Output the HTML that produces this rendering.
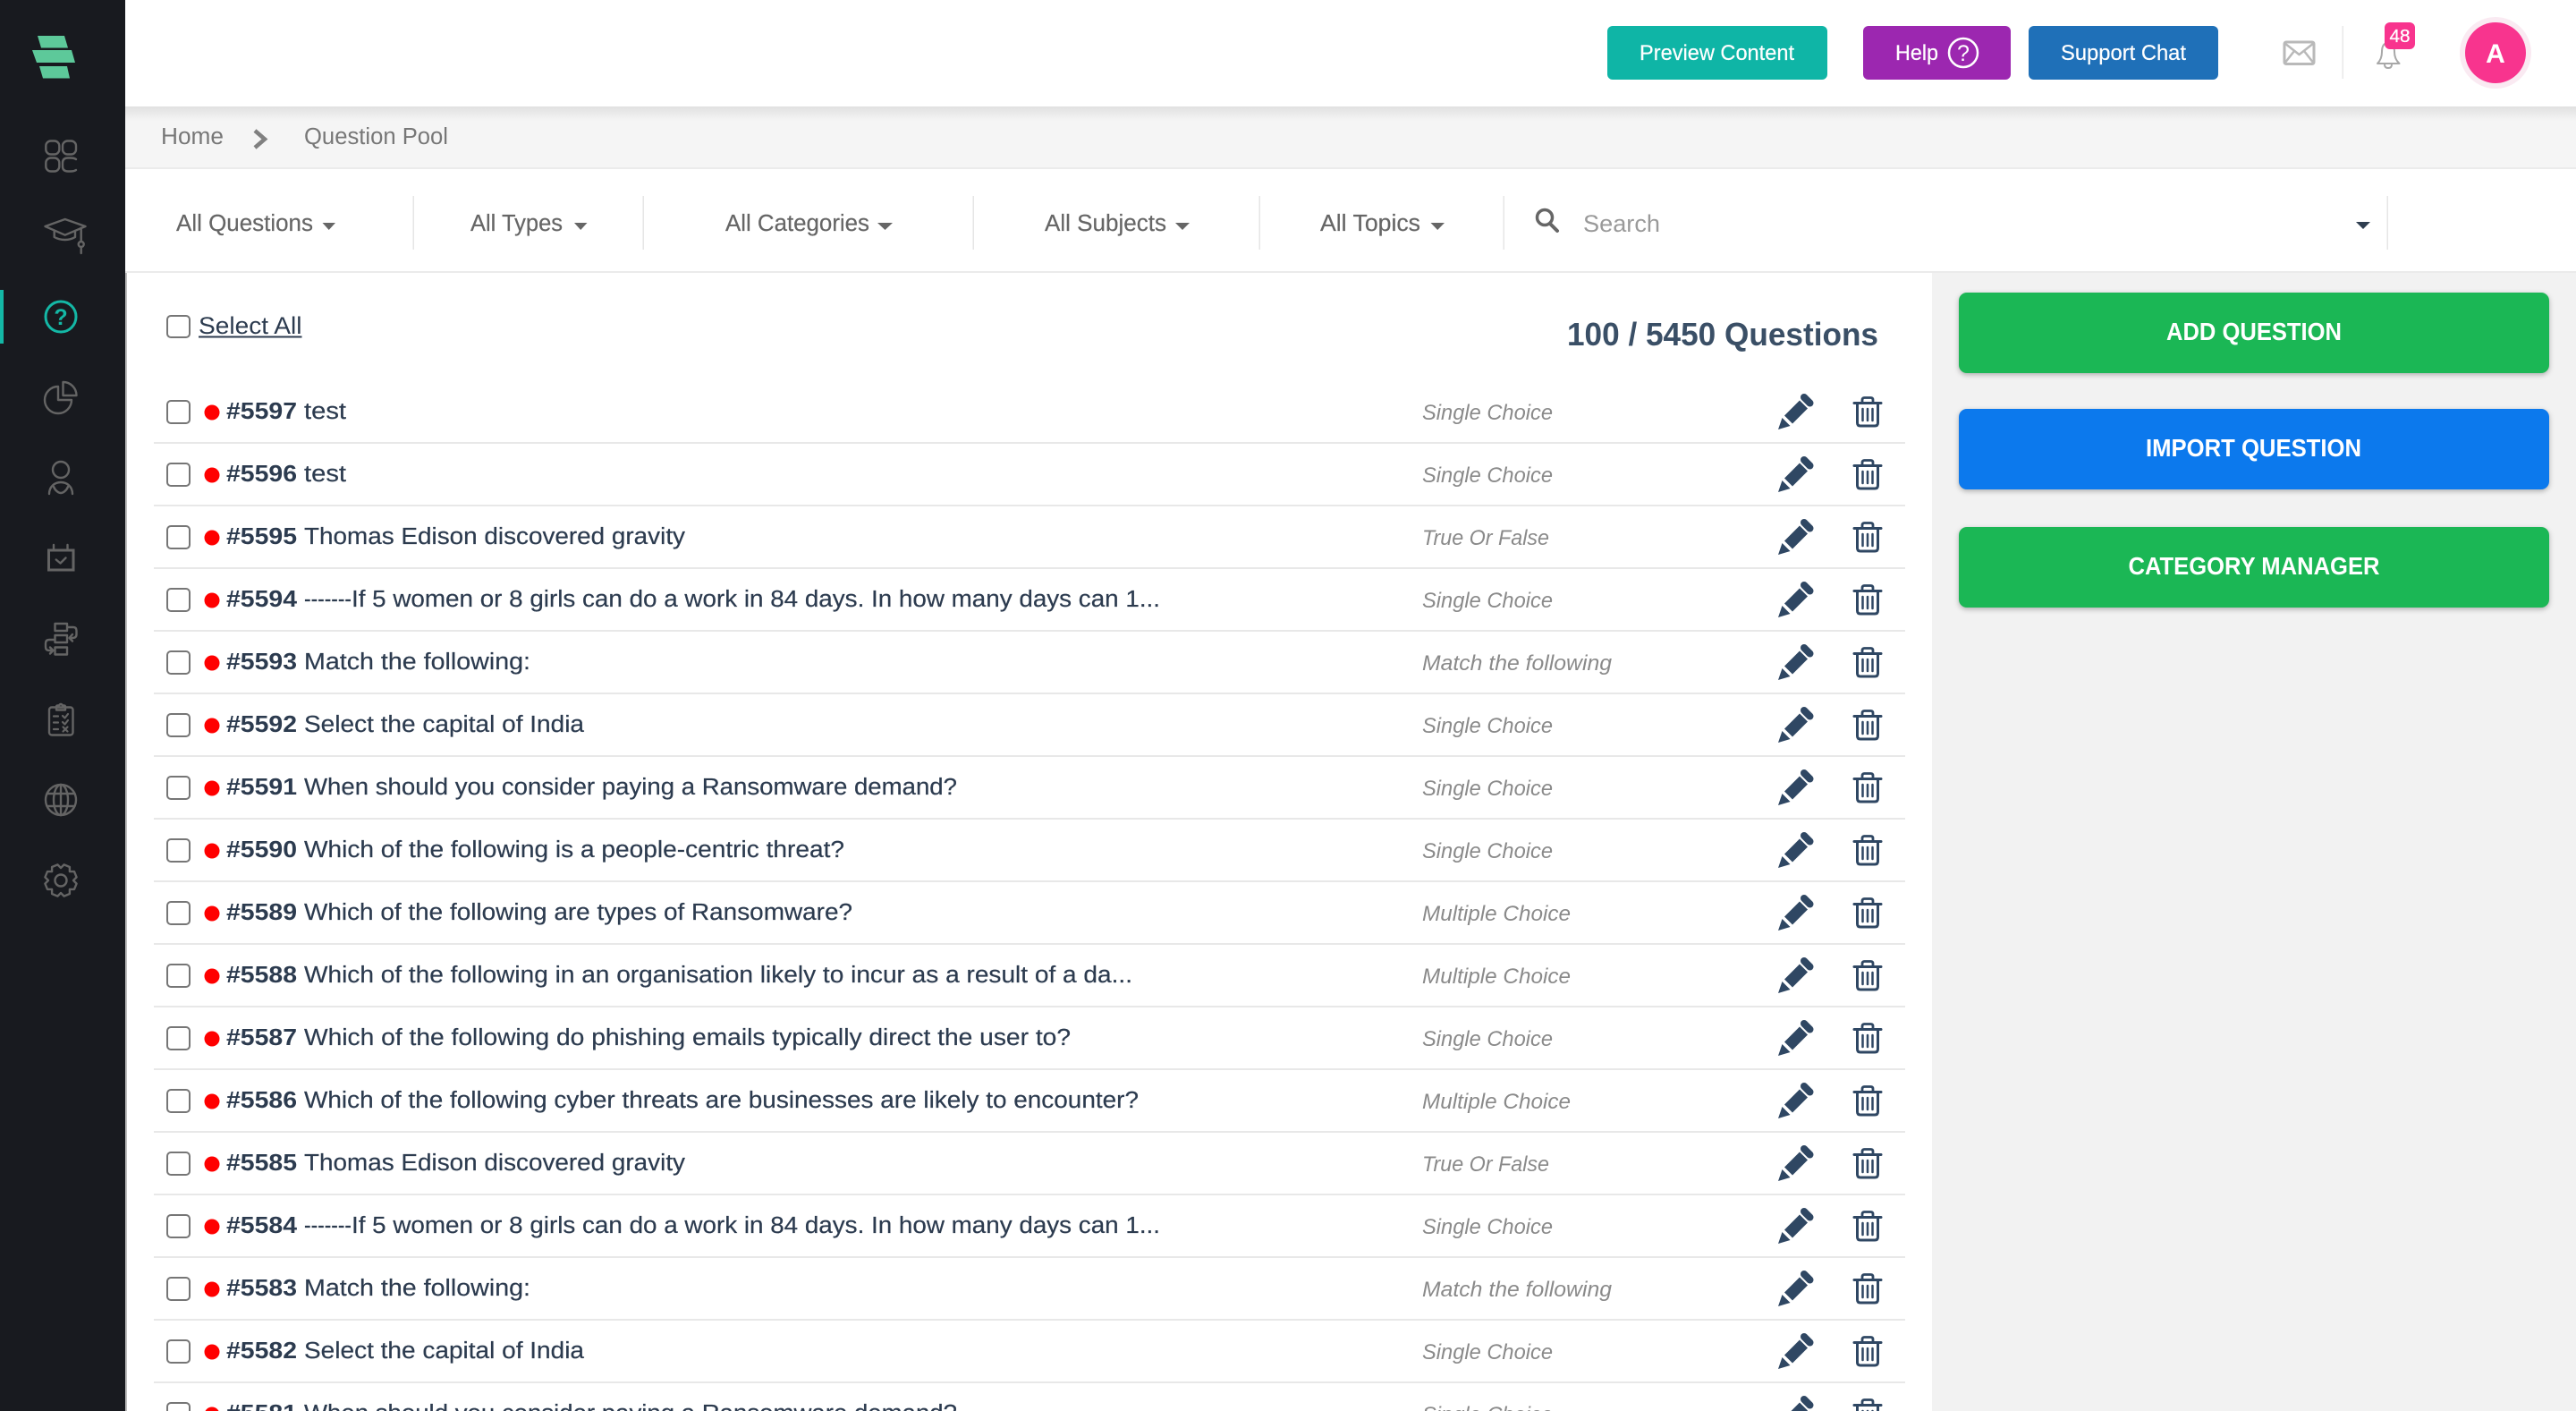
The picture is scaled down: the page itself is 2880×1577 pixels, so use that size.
<!DOCTYPE html>
<html lang="en">
<head>
<meta charset="utf-8">
<title>Question Pool</title>
<style>
html,body{margin:0;padding:0;width:2880px;height:1577px;overflow:hidden;background:#fff}
svg{display:block;position:absolute;left:0;top:0}
text{font-family:"Liberation Sans",sans-serif;white-space:pre}
.ti{font-size:25.5px;fill:#2c3b4f;stroke:#2c3b4f;stroke-width:.2}
.id{font-size:25.5px;font-weight:bold;fill:#2c3b4f}
.ty{font-size:24px;font-style:italic;fill:#8a8a8a}
.fl{font-size:25.5px;fill:#666;stroke:#666;stroke-width:.2}
.bt{font-size:24px;fill:#fff;stroke:#fff;stroke-width:.2}
.bb{font-size:27.5px;font-weight:bold;fill:#fff}
.ic{fill:none;stroke:#646464;stroke-width:2.4;stroke-linecap:round;stroke-linejoin:round}
</style>
</head>
<body>
<svg width="2880" height="1577" viewBox="0 0 2880 1577" xmlns="http://www.w3.org/2000/svg">
<defs>
<linearGradient id="hs" x1="0" y1="0" x2="0" y2="1"><stop offset="0" stop-color="#e0e0e0"/><stop offset="1" stop-color="#f5f5f5"/></linearGradient>
<g id="row">
<rect x="187" y="448" width="25" height="25" rx="4" fill="#fff" stroke="#767676" stroke-width="2"/>
<circle cx="237" cy="461" r="8.5" fill="#f00"/>
<rect x="172" y="494" width="1958" height="2" fill="#e8e8e8"/>
<g transform="translate(1988,440)" fill="#2f4763">
<path d="M0 40 L4.5 27 L13.5 36 Z"/>
<path d="M7 24.5 L24 7.5 L33 16.5 L16 33.5 Z"/>
<path d="M29 4 L35.5 10.5" stroke="#2f4763" stroke-width="8" stroke-linecap="round"/>
</g>
<g transform="translate(2072,443)" fill="none" stroke="#2f4763" stroke-linecap="round" stroke-linejoin="round">
<path d="M1 7.5 H31" stroke-width="3"/>
<path d="M10 7 V4 Q10 1.5 12.5 1.5 H19.5 Q22 1.5 22 4 V7" stroke-width="2.8"/>
<path d="M4.5 8 V29.5 Q4.5 33 8 33 H24 Q27.5 33 27.5 29.5 V8" stroke-width="3"/>
<path d="M10.5 14 V27 M16 14 V27 M21.5 14 V27" stroke-width="2.5"/>
</g>
</g>
</defs>

<!-- backgrounds -->
<rect width="2880" height="1577" fill="#fff"/>
<rect x="140" y="119" width="2740" height="68" fill="#f5f5f5"/>
<rect x="140" y="119" width="2740" height="16" fill="url(#hs)"/>
<rect x="140" y="187" width="2740" height="2" fill="#ebebeb"/>
<rect x="140" y="303" width="2740" height="2" fill="#ebebeb"/>
<rect x="2160" y="305" width="720" height="1272" fill="#f2f2f2"/>

<!-- sidebar -->
<rect width="140" height="1577" fill="#181a1f"/>
<rect x="140" y="305" width="2" height="1272" fill="#bcbcbc"/>
<rect x="0" y="324" width="4" height="60" fill="#14b8a6"/>
<g fill="#5dc99a">
<path d="M42 40 H72 L76 53.5 H46 Z"/>
<path d="M36 56 H80 L84 70 H41 Z"/>
<path d="M44 74 H75 L78 87.5 H48 Z"/>
</g>
<g class="ic">
<rect x="51.3" y="157.5" width="15" height="15" rx="5.5"/>
<rect x="70" y="157.5" width="15" height="15" rx="5.5"/>
<rect x="51.3" y="176.5" width="15" height="15" rx="5.5"/>
<path d="M85 178 Q83 176.5 79 176.5 H76 Q70 176.5 70 182 V186 Q70 191.5 76 191.5 H79 Q83 191.5 85 190"/>
<path d="M72.7 245 L50.5 253 L72.7 262.7 L95.5 253 Z"/>
<path d="M60.7 258 V265 Q66 268 72.7 268 Q79 268 84 265 V258"/>
<path d="M90.7 255 V270 M90.7 276 V283"/><circle cx="90.7" cy="273" r="3"/>
<path d="M65 432 V447 H80 A15 15 0 1 1 65 432 Z"/>
<path d="M70.5 427 V442 H85.5 A15 15 0 0 0 70.5 427 Z"/>
<circle cx="68" cy="525" r="9"/>
<path d="M55 552 C55 544 61 539 68 539 C75 539 81 544 81 552"/>
<path d="M60 544 C62 549 66 551 68 551 C70 551 74 549 76 544"/>
<rect x="54.5" y="615" width="27.5" height="22" stroke-width="3" stroke-linecap="butt" stroke-linejoin="miter"/>
<path d="M60 609 V615 M75.5 609 V615"/>
<path d="M62.7 625.5 L67.5 629.5 L73.5 623.5" stroke-width="2.4"/>
<rect x="61.5" y="697" width="13.5" height="8"/>
<rect x="61.5" y="710" width="13.5" height="8"/>
<rect x="61.5" y="723.5" width="13.5" height="8"/>
<path d="M76 701 H82 Q85.5 701 85.5 705 V709 Q85.5 713 81 713 H78 M81 709 L77.5 713 L81 716.5"/>
<path d="M60 715 H55 Q51 715 51 719 V723 Q51 727 55 727 H59 M56 723.5 L59.5 727 L56 730.5"/>
<rect x="55" y="790.5" width="26.5" height="31" rx="3"/>
<path d="M63 793.5 V790 Q63 788.5 65 788.5 H66 Q68 785.5 70 788.5 H71 Q73 788.5 73 790 V793.5 Z"/>
<path d="M60 800.5 H65 M60 807.5 H65 M60 815 H65" stroke-width="2.2"/>
<path d="M70 800 L72.5 802.5 L76 798 M70 807 L72.5 809.5 L76 805 M70.5 812.5 L75.5 817.5 M75.5 812.5 L70.5 817.5" stroke-width="2.2"/>
<circle cx="68" cy="894" r="17"/>
<ellipse cx="68" cy="894" rx="8" ry="17"/>
<path d="M68 877 V911 M53 887 H83 M53 901 H83"/>
<g transform="translate(68,984)">
<path d="M0-14 L3.6-17.6 L9.9-15 L9.9-9.9 L15-9.9 L17.6-3.6 L14 0 L17.6 3.6 L15 9.9 L9.9 9.9 L9.9 15 L3.6 17.6 L0 14 L-3.6 17.6 L-9.9 15 L-9.9 9.9 L-15 9.9 L-17.6 3.6 L-14 0 L-17.6-3.6 L-15-9.9 L-9.9-9.9 L-9.9-15 L-3.6-17.6 Z"/>
<circle r="6.5"/>
</g>
</g>
<circle cx="68" cy="354" r="17" fill="none" stroke="#14b8a6" stroke-width="3"/>
<text x="68" y="363" text-anchor="middle" font-size="25" font-weight="bold" fill="#14b8a6">?</text>

<!-- header -->
<rect x="1797" y="29" width="246" height="60" rx="6" fill="#0fb5a6"/>
<text class="bt" x="1833" y="67" textLength="173" lengthAdjust="spacingAndGlyphs">Preview Content</text>
<rect x="2083" y="29" width="165" height="60" rx="6" fill="#9c27b0"/>
<text class="bt" x="2119" y="67" textLength="48" lengthAdjust="spacingAndGlyphs">Help</text>
<circle cx="2195" cy="59" r="16" fill="none" stroke="#fff" stroke-width="2.5"/>
<text x="2195" y="68" text-anchor="middle" font-size="25" fill="#fff">?</text>
<rect x="2268" y="29" width="212" height="60" rx="6" fill="#1f70b8"/>
<text class="bt" x="2304" y="67" textLength="140" lengthAdjust="spacingAndGlyphs">Support Chat</text>
<g fill="none" stroke="#b9b9b9" stroke-width="2.5" stroke-linejoin="round">
<rect x="2554" y="47" width="33" height="24.5" rx="2" stroke-width="3"/>
<path d="M2554 48 L2570.5 61 L2587 48 M2554 71 L2565 57 M2587 71 L2576 57"/>
</g>
<rect x="2618.5" y="29" width="1.5" height="59" fill="#e8e8e8"/>
<g fill="none" stroke="#a8a8a8" stroke-width="2" stroke-linejoin="round">
<path d="M2658 71 Q2663 66 2663 58 Q2663 48 2670 48 Q2677 48 2677 58 Q2677 66 2682.5 71 Z"/>
<path d="M2666 72 Q2666 76 2670 76 Q2674 76 2674 72"/>
</g>
<rect x="2666" y="25" width="34" height="30" rx="6" fill="#f8348e"/>
<text x="2683" y="47" text-anchor="middle" font-size="20" fill="#fff" stroke="#fff" stroke-width=".3" textLength="23" lengthAdjust="spacingAndGlyphs">48</text>
<circle cx="2790" cy="59" r="40" fill="#faeaf2"/>
<circle cx="2790" cy="59" r="34" fill="#f8348e"/>
<text x="2790" y="70" text-anchor="middle" font-size="30" font-weight="bold" fill="#fff">A</text>

<!-- breadcrumb -->
<text x="180" y="161" font-size="25.5" fill="#777" textLength="70" lengthAdjust="spacingAndGlyphs">Home</text>
<path d="M285 146 L296 155.5 L285 165" fill="none" stroke="#808080" stroke-width="4.5"/>
<text x="340" y="161" font-size="25.5" fill="#777" textLength="161" lengthAdjust="spacingAndGlyphs">Question Pool</text>

<!-- filters -->
<text class="fl" x="197" y="258" textLength="153" lengthAdjust="spacingAndGlyphs">All Questions</text>
<path d="M360.5 249 H375 L367.7 257 Z" fill="#666"/>
<rect x="461.5" y="219" width="1.5" height="60" fill="#e6e6e6"/>
<text class="fl" x="526" y="258" textLength="103" lengthAdjust="spacingAndGlyphs">All Types</text>
<path d="M642 249 H656.5 L649.2 257 Z" fill="#666"/>
<rect x="718.5" y="219" width="1.5" height="60" fill="#e6e6e6"/>
<text class="fl" x="811" y="258" textLength="161" lengthAdjust="spacingAndGlyphs">All Categories</text>
<path d="M981 249 H998 L989.5 257 Z" fill="#666"/>
<rect x="1087.5" y="219" width="1.5" height="60" fill="#e6e6e6"/>
<text class="fl" x="1168" y="258" textLength="136" lengthAdjust="spacingAndGlyphs">All Subjects</text>
<path d="M1314 249 H1330 L1322 257 Z" fill="#666"/>
<rect x="1407.5" y="219" width="1.5" height="60" fill="#e6e6e6"/>
<text class="fl" x="1476" y="258" textLength="112" lengthAdjust="spacingAndGlyphs">All Topics</text>
<path d="M1599.5 249 H1615 L1607.2 257 Z" fill="#666"/>
<rect x="1680.5" y="219" width="1.5" height="60" fill="#e6e6e6"/>
<circle cx="1727" cy="243" r="8.5" fill="none" stroke="#666" stroke-width="3.5"/>
<path d="M1733 250 L1741 258" stroke="#666" stroke-width="4" stroke-linecap="round"/>
<text x="1770" y="259" font-size="27" fill="#9a9a9a" textLength="86" lengthAdjust="spacingAndGlyphs">Search</text>
<path d="M2634 248 H2650 L2642 256 Z" fill="#2f3e50"/>
<rect x="2668.5" y="219" width="1.5" height="60" fill="#e6e6e6"/>

<!-- list top -->
<rect x="187" y="353" width="25" height="24" rx="4" fill="#fff" stroke="#767676" stroke-width="2"/>
<text x="222" y="373" font-size="27" fill="#2c3b4f" textLength="115.5" lengthAdjust="spacingAndGlyphs">Select All</text>
<rect x="222" y="375.5" width="115.5" height="2" fill="#2c3b4f"/>
<text x="1752" y="386" font-size="36" font-weight="bold" fill="#3a4f66" textLength="348" lengthAdjust="spacingAndGlyphs">100 / 5450 Questions</text>

<!-- rows -->
<use href="#row"/>
<g><text class="id" x="253" y="468" textLength="79" lengthAdjust="spacingAndGlyphs">#5597</text><text class="ti" x="340" y="468" textLength="47" lengthAdjust="spacingAndGlyphs">test</text><text class="ty" x="1590" y="469" textLength="146" lengthAdjust="spacingAndGlyphs">Single Choice</text></g>
<g transform="translate(0,70)"><use href="#row"/><text class="id" x="253" y="468" textLength="79" lengthAdjust="spacingAndGlyphs">#5596</text><text class="ti" x="340" y="468" textLength="47" lengthAdjust="spacingAndGlyphs">test</text><text class="ty" x="1590" y="469" textLength="146" lengthAdjust="spacingAndGlyphs">Single Choice</text></g>
<g transform="translate(0,140)"><use href="#row"/><text class="id" x="253" y="468" textLength="79" lengthAdjust="spacingAndGlyphs">#5595</text><text class="ti" x="340" y="468" textLength="426" lengthAdjust="spacingAndGlyphs">Thomas Edison discovered gravity</text><text class="ty" x="1590" y="469" textLength="142" lengthAdjust="spacingAndGlyphs">True Or False</text></g>
<g transform="translate(0,210)"><use href="#row"/><text class="id" x="253" y="468" textLength="79" lengthAdjust="spacingAndGlyphs">#5594</text><text class="ti" x="340" y="468" textLength="53" lengthAdjust="spacingAndGlyphs">-------</text><text class="ti" x="393" y="468" textLength="904" lengthAdjust="spacingAndGlyphs">If 5 women or 8 girls can do a work in 84 days. In how many days can 1...</text><text class="ty" x="1590" y="469" textLength="146" lengthAdjust="spacingAndGlyphs">Single Choice</text></g>
<g transform="translate(0,280)"><use href="#row"/><text class="id" x="253" y="468" textLength="79" lengthAdjust="spacingAndGlyphs">#5593</text><text class="ti" x="340" y="468" textLength="253" lengthAdjust="spacingAndGlyphs">Match the following:</text><text class="ty" x="1590" y="469" textLength="212" lengthAdjust="spacingAndGlyphs">Match the following</text></g>
<g transform="translate(0,350)"><use href="#row"/><text class="id" x="253" y="468" textLength="79" lengthAdjust="spacingAndGlyphs">#5592</text><text class="ti" x="340" y="468" textLength="313" lengthAdjust="spacingAndGlyphs">Select the capital of India</text><text class="ty" x="1590" y="469" textLength="146" lengthAdjust="spacingAndGlyphs">Single Choice</text></g>
<g transform="translate(0,420)"><use href="#row"/><text class="id" x="253" y="468" textLength="79" lengthAdjust="spacingAndGlyphs">#5591</text><text class="ti" x="340" y="468" textLength="730" lengthAdjust="spacingAndGlyphs">When should you consider paying a Ransomware demand?</text><text class="ty" x="1590" y="469" textLength="146" lengthAdjust="spacingAndGlyphs">Single Choice</text></g>
<g transform="translate(0,490)"><use href="#row"/><text class="id" x="253" y="468" textLength="79" lengthAdjust="spacingAndGlyphs">#5590</text><text class="ti" x="340" y="468" textLength="604" lengthAdjust="spacingAndGlyphs">Which of the following is a people-centric threat?</text><text class="ty" x="1590" y="469" textLength="146" lengthAdjust="spacingAndGlyphs">Single Choice</text></g>
<g transform="translate(0,560)"><use href="#row"/><text class="id" x="253" y="468" textLength="79" lengthAdjust="spacingAndGlyphs">#5589</text><text class="ti" x="340" y="468" textLength="613" lengthAdjust="spacingAndGlyphs">Which of the following are types of Ransomware?</text><text class="ty" x="1590" y="469" textLength="166" lengthAdjust="spacingAndGlyphs">Multiple Choice</text></g>
<g transform="translate(0,630)"><use href="#row"/><text class="id" x="253" y="468" textLength="79" lengthAdjust="spacingAndGlyphs">#5588</text><text class="ti" x="340" y="468" textLength="926" lengthAdjust="spacingAndGlyphs">Which of the following in an organisation likely to incur as a result of a da...</text><text class="ty" x="1590" y="469" textLength="166" lengthAdjust="spacingAndGlyphs">Multiple Choice</text></g>
<g transform="translate(0,700)"><use href="#row"/><text class="id" x="253" y="468" textLength="79" lengthAdjust="spacingAndGlyphs">#5587</text><text class="ti" x="340" y="468" textLength="857" lengthAdjust="spacingAndGlyphs">Which of the following do phishing emails typically direct the user to?</text><text class="ty" x="1590" y="469" textLength="146" lengthAdjust="spacingAndGlyphs">Single Choice</text></g>
<g transform="translate(0,770)"><use href="#row"/><text class="id" x="253" y="468" textLength="79" lengthAdjust="spacingAndGlyphs">#5586</text><text class="ti" x="340" y="468" textLength="933" lengthAdjust="spacingAndGlyphs">Which of the following cyber threats are businesses are likely to encounter?</text><text class="ty" x="1590" y="469" textLength="166" lengthAdjust="spacingAndGlyphs">Multiple Choice</text></g>
<g transform="translate(0,840)"><use href="#row"/><text class="id" x="253" y="468" textLength="79" lengthAdjust="spacingAndGlyphs">#5585</text><text class="ti" x="340" y="468" textLength="426" lengthAdjust="spacingAndGlyphs">Thomas Edison discovered gravity</text><text class="ty" x="1590" y="469" textLength="142" lengthAdjust="spacingAndGlyphs">True Or False</text></g>
<g transform="translate(0,910)"><use href="#row"/><text class="id" x="253" y="468" textLength="79" lengthAdjust="spacingAndGlyphs">#5584</text><text class="ti" x="340" y="468" textLength="53" lengthAdjust="spacingAndGlyphs">-------</text><text class="ti" x="393" y="468" textLength="904" lengthAdjust="spacingAndGlyphs">If 5 women or 8 girls can do a work in 84 days. In how many days can 1...</text><text class="ty" x="1590" y="469" textLength="146" lengthAdjust="spacingAndGlyphs">Single Choice</text></g>
<g transform="translate(0,980)"><use href="#row"/><text class="id" x="253" y="468" textLength="79" lengthAdjust="spacingAndGlyphs">#5583</text><text class="ti" x="340" y="468" textLength="253" lengthAdjust="spacingAndGlyphs">Match the following:</text><text class="ty" x="1590" y="469" textLength="212" lengthAdjust="spacingAndGlyphs">Match the following</text></g>
<g transform="translate(0,1050)"><use href="#row"/><text class="id" x="253" y="468" textLength="79" lengthAdjust="spacingAndGlyphs">#5582</text><text class="ti" x="340" y="468" textLength="313" lengthAdjust="spacingAndGlyphs">Select the capital of India</text><text class="ty" x="1590" y="469" textLength="146" lengthAdjust="spacingAndGlyphs">Single Choice</text></g>
<g transform="translate(0,1120)"><use href="#row"/><text class="id" x="253" y="468" textLength="79" lengthAdjust="spacingAndGlyphs">#5581</text><text class="ti" x="340" y="468" textLength="730" lengthAdjust="spacingAndGlyphs">When should you consider paying a Ransomware demand?</text><text class="ty" x="1590" y="469" textLength="146" lengthAdjust="spacingAndGlyphs">Single Choice</text></g>

<!-- action buttons -->
<g style="filter:drop-shadow(0 2px 3px rgba(0,0,0,.28))">
<rect x="2190" y="327" width="660" height="90" rx="9" fill="#1bb755"/>
<rect x="2190" y="457" width="660" height="90" rx="9" fill="#0c79ed"/>
<rect x="2190" y="589" width="660" height="90" rx="9" fill="#1bb755"/>
</g>
<text class="bb" x="2422" y="380" textLength="196" lengthAdjust="spacingAndGlyphs">ADD QUESTION</text>
<text class="bb" x="2399" y="510" textLength="241" lengthAdjust="spacingAndGlyphs">IMPORT QUESTION</text>
<text class="bb" x="2379.5" y="642" textLength="281" lengthAdjust="spacingAndGlyphs">CATEGORY MANAGER</text>
</svg>
</body>
</html>
